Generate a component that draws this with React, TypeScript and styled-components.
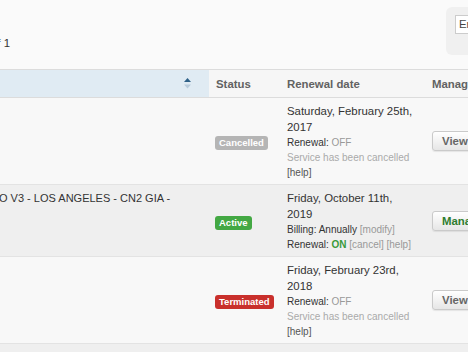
import styled, { createGlobalStyle } from "styled-components";

const GlobalStyle = createGlobalStyle`
  html, body {
    margin: 0;
    padding: 0;
  }
  body {
    background: #fafafa;
    font-family: "Liberation Sans", Arial, sans-serif;
    color: #333;
    overflow: hidden;
  }
`;

const Page = styled.div`
  width: 468px;
  height: 352px;
  overflow: hidden;
`;

const TopBar = styled.div`
  height: 69px;
  display: flex;
  justify-content: space-between;
  align-items: flex-start;
`;

const PageInfo = styled.div`
  width: 100px;
  margin-left: -90px;
  margin-top: 37px;
  text-align: right;
  white-space: nowrap;
  font-size: 11.4px;
`;

const SearchPanel = styled.div`
  flex-shrink: 0;
  width: 180px;
  height: 48px;
  margin-top: 7px;
  margin-right: -158px;
  padding: 7px 0 0 9px;
  box-sizing: border-box;
  background: #f0f0f0;
  border-radius: 6px;
`;

const SearchInput = styled.input`
  width: 160px;
  height: 19px;
  box-sizing: border-box;
  padding: 0 3px;
  border: 1px solid #ccc;
  background: #fff;
  font-family: inherit;
  font-size: 11.4px;
  color: #333;
  &::placeholder {
    color: #444;
  }
`;

const Table = styled.table`
  width: 540px;
  border-collapse: collapse;
  table-layout: fixed;
`;

const HeadCell = styled.th<{ $sorted?: boolean }>`
  height: 27px;
  padding: 0 7px;
  text-align: left;
  font-size: 11.4px;
  font-weight: bold;
  color: #626262;
  background: ${(p) => (p.$sorted ? "#e0ebf3" : "#f6f6f6")};
  border-top: 1px solid #dcdcdc;
  border-bottom: 1px solid #dcdcdc;
  white-space: nowrap;
`;

const SortIcon = styled.svg`
  display: block;
  margin: 0 11px 0 auto;
`;

const Row = styled.tr<{ $striped?: boolean }>`
  background: ${(p) => (p.$striped ? "#efefef" : "#f8f8f8")};
  & > td {
    border-bottom: 1px solid #e3e3e3;
  }
`;

const ProductCell = styled.td`
  vertical-align: top;
  padding: 5px 0 0;
  overflow: hidden;
`;

const ProductName = styled.div`
  margin-left: -1px;
  font-size: 11px;
  line-height: 16px;
  white-space: nowrap;
`;

const StatusCell = styled.td`
  padding: 0 6px;
  vertical-align: middle;
`;

const Label = styled.span<{ $tone: string }>`
  display: inline-block;
  padding: 2px 4px;
  border-radius: 3px;
  font-size: 9.5px;
  line-height: 10px;
  font-weight: bold;
  color: #fff;
  background: ${(p) => p.$tone};
  white-space: nowrap;
`;

const RenewalCell = styled.td`
  padding: 5px 7px 4px;
  vertical-align: top;
`;

const DateTitle = styled.div`
  font-size: 11.4px;
  line-height: 16px;
  color: #333;
  white-space: nowrap;
`;

const Detail = styled.div<{ $muted?: boolean }>`
  font-size: 10px;
  line-height: 15px;
  color: ${(p) => (p.$muted ? "#aaa" : "#333")};
  white-space: nowrap;
`;

const Off = styled.span`
  color: #999;
`;

const On = styled.span`
  color: #3a9a3a;
  font-weight: bold;
`;

const Bracket = styled.span<{ $dark?: boolean }>`
  color: ${(p) => (p.$dark ? "#555" : "#999")};
`;

const ManageCell = styled.td`
  padding: 0 7px;
  vertical-align: middle;
`;

const ActionButton = styled.button<{ $primary?: boolean }>`
  padding: 3px 9px;
  border: 1px solid #cacaca;
  border-radius: 3px;
  background: linear-gradient(#ffffff, #e6e6e6);
  box-shadow: 0 1px 1px rgba(0, 0, 0, 0.08);
  font-family: inherit;
  font-size: 11.4px;
  line-height: 12px;
  font-weight: bold;
  color: ${(p) => (p.$primary ? "#2f7d2f" : "#666")};
  white-space: nowrap;
`;

const Footer = styled.div`
  height: 40px;
  background: #efefef;
`;

export default function App() {
  return (
    <Page>
      <GlobalStyle />
      <TopBar>
        <PageInfo>Page 1 of 1</PageInfo>
        <SearchPanel>
          <SearchInput placeholder="Enter keyword(s)" />
        </SearchPanel>
      </TopBar>
      <Table>
        <colgroup>
          <col style={{ width: 209 }} />
          <col style={{ width: 71 }} />
          <col style={{ width: 145 }} />
          <col />
        </colgroup>
        <thead>
          <tr>
            <HeadCell $sorted>
              <SortIcon width="7" height="11" viewBox="0 0 7 11">
                <polygon points="3.5,0 7,4 0,4" fill="#2f6187" />
                <polygon points="0,6.5 7,6.5 3.5,10.5" fill="#b8cbdb" />
              </SortIcon>
            </HeadCell>
            <HeadCell>Status</HeadCell>
            <HeadCell>Renewal date</HeadCell>
            <HeadCell>Manage</HeadCell>
          </tr>
        </thead>
        <tbody>
          <Row>
            <ProductCell />
            <StatusCell>
              <Label $tone="#b5b5b5">Cancelled</Label>
            </StatusCell>
            <RenewalCell>
              <DateTitle>
                Saturday, February 25th,
                <br />
                2017
              </DateTitle>
              <Detail>
                Renewal: <Off>OFF</Off>
              </Detail>
              <Detail $muted>Service has been cancelled</Detail>
              <Detail>
                <Bracket $dark>[help]</Bracket>
              </Detail>
            </RenewalCell>
            <ManageCell>
              <ActionButton>View details</ActionButton>
            </ManageCell>
          </Row>
          <Row $striped>
            <ProductCell>
              <ProductName>O V3 - LOS ANGELES - CN2 GIA -</ProductName>
            </ProductCell>
            <StatusCell>
              <Label $tone="#43a843">Active</Label>
            </StatusCell>
            <RenewalCell>
              <DateTitle>
                Friday, October 11th,
                <br />
                2019
              </DateTitle>
              <Detail>
                Billing: Annually <Bracket>[modify]</Bracket>
              </Detail>
              <Detail>
                Renewal: <On>ON</On> <Bracket>[cancel]</Bracket> <Bracket>[help]</Bracket>
              </Detail>
            </RenewalCell>
            <ManageCell>
              <ActionButton $primary>Manage</ActionButton>
            </ManageCell>
          </Row>
          <Row>
            <ProductCell />
            <StatusCell>
              <Label $tone="#c9302c">Terminated</Label>
            </StatusCell>
            <RenewalCell>
              <DateTitle>
                Friday, February 23rd,
                <br />
                2018
              </DateTitle>
              <Detail>
                Renewal: <Off>OFF</Off>
              </Detail>
              <Detail $muted>Service has been cancelled</Detail>
              <Detail>
                <Bracket $dark>[help]</Bracket>
              </Detail>
            </RenewalCell>
            <ManageCell>
              <ActionButton>View details</ActionButton>
            </ManageCell>
          </Row>
        </tbody>
      </Table>
      <Footer />
    </Page>
  );
}
